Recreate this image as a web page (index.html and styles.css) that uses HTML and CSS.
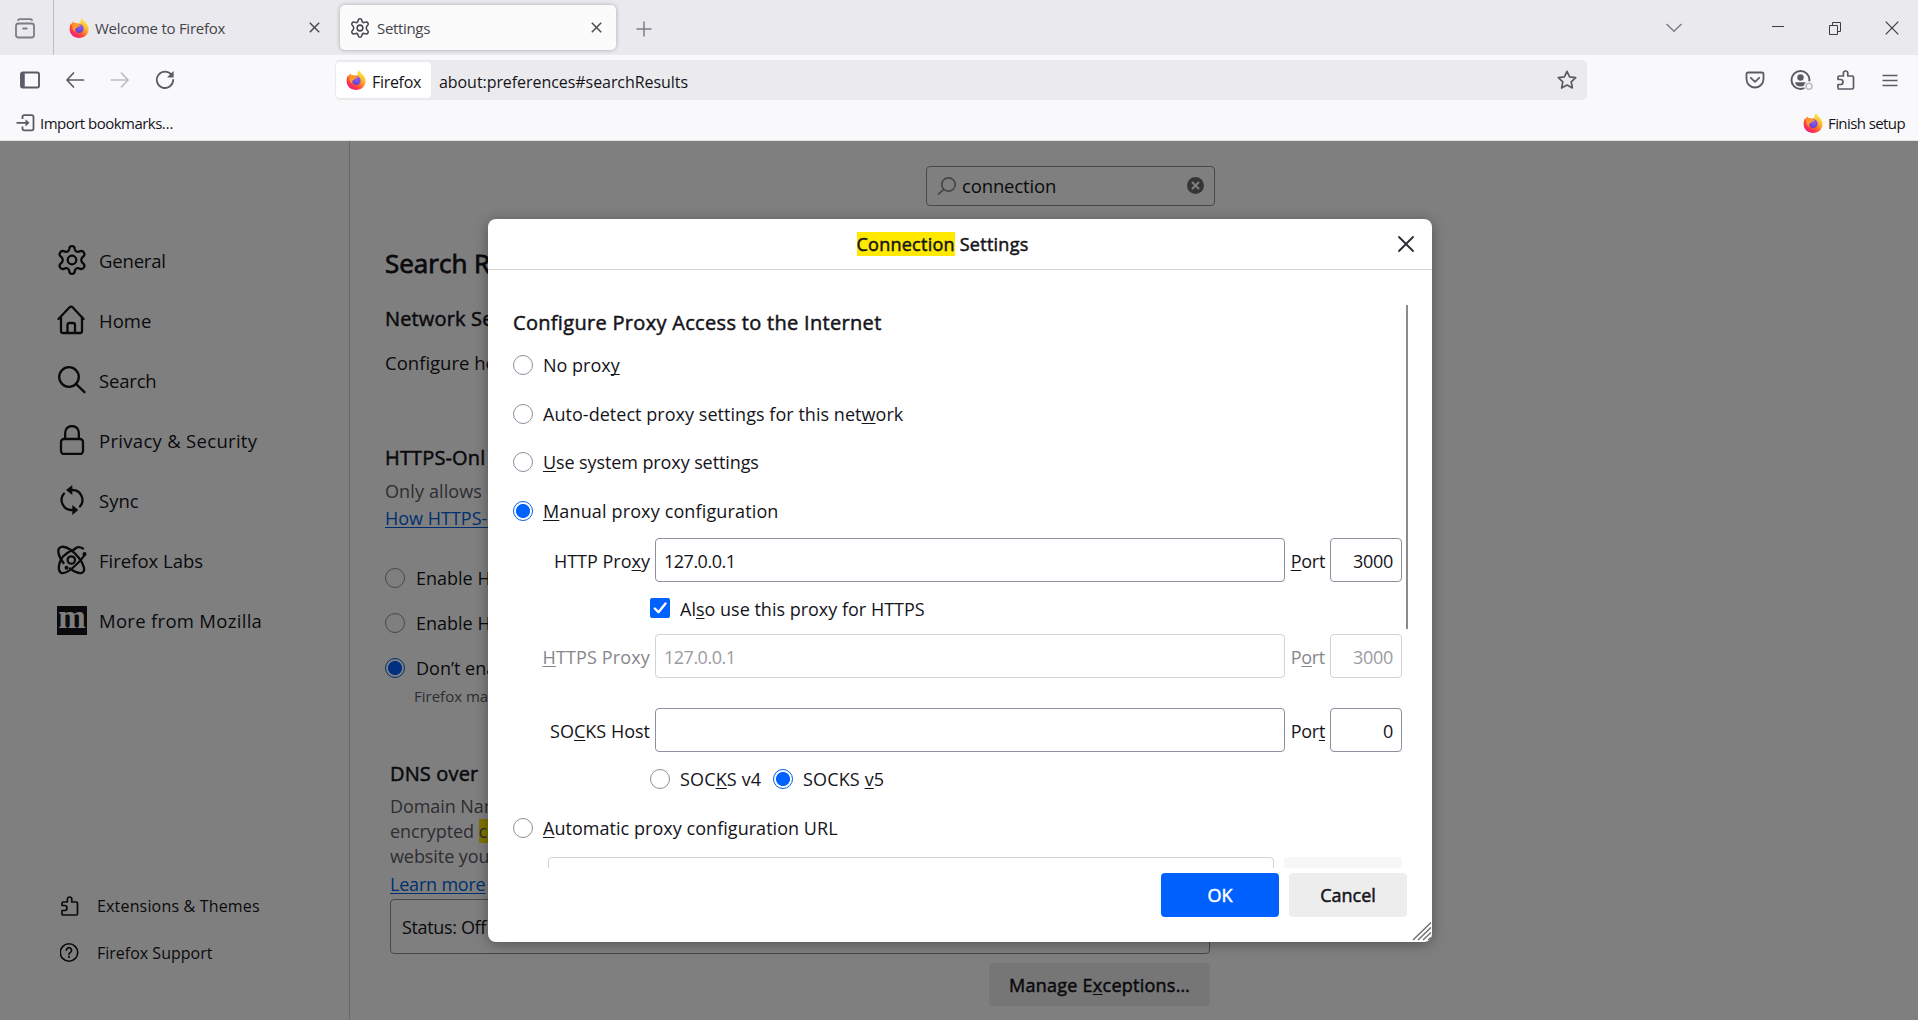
FILE: index.html
```
<!DOCTYPE html>
<html lang="en">
<head>
<meta charset="utf-8">
<title>Settings</title>
<link rel="stylesheet" href="styles.css">
</head>
<body>
<svg class="defs" width="0" height="0" aria-hidden="true">
  <defs>
    <linearGradient id="flame" x1="0.85" y1="0.1" x2="0.2" y2="0.95">
      <stop offset="0" stop-color="#fff44f"/>
      <stop offset="0.35" stop-color="#ffb02e"/>
      <stop offset="0.65" stop-color="#ff5634"/>
      <stop offset="1" stop-color="#f5127b"/>
    </linearGradient>
    <radialGradient id="globe" cx="0.6" cy="0.3" r="0.8">
      <stop offset="0" stop-color="#9059ff"/>
      <stop offset="1" stop-color="#5b3fc4"/>
    </radialGradient>
    <symbol id="firefox" viewBox="0 0 20 20">
      <path fill="url(#flame)" d="M13.1 0c.4 1.7 1.6 2.6 3 3.9 2 1.900 3.500 4 3.500 7 0 5-4.100 9-9.500 9S.6 16 .6 10.900c0-2.400.5-4.300 1.500-6 .2.7.4 1.200.8 1.600.1-1.300.5-2.400 1.300-3.300.3.9.8 1.500 1.500 1.900 1-.2 2-.1 2.900.3 1-.3 2-.3 3 0C11.300 3.700 11.700 1.700 13.100 0z"/>
      <circle cx="10.300" cy="10.600" r="4.300" fill="url(#globe)"/>
      <path fill="#ff9a2b" d="M3.500 6.600c1.500-1.200 3.800-1.300 5.800-.3l2.500.6c-.3 1-1.300 1.400-2.600 1.700-.5 1.300-1.500 1.400-2.400 1.900-.9.7-.8 2.400.2 3.700-2.700-1-4.300-4.300-3.500-7.600z"/>
    </symbol>
    <symbol id="gear" viewBox="0 0 30 30">
      <g fill="none" stroke="currentColor" stroke-width="2.300" stroke-linejoin="round">
        <circle cx="15" cy="15" r="4.300"/>
        <path d="M12.300 3.400Q12.600 1.200 15 1.200Q17.400 1.200 17.700 3.400L18.100 5.300Q19.100 7.100 21.200 6.900L23.300 6.200Q25.600 5.400 26.900 7.500Q28.200 9.600 26.400 11.300L25.100 12.500Q23.500 15 25.100 17.500L26.400 18.700Q28.200 20.400 26.900 22.500Q25.600 24.600 23.300 23.800L21.200 23.100Q19.100 22.900 18.100 24.700L17.700 26.600Q17.400 28.800 15 28.800Q12.600 28.800 12.300 26.600L11.900 24.700Q10.900 22.900 8.800 23.100L6.700 23.800Q4.400 24.600 3.100 22.500Q1.800 20.400 3.600 18.700L4.900 17.500Q6.500 15 4.900 12.500L3.600 11.300Q1.800 9.600 3.100 7.500Q4.400 5.400 6.700 6.200L8.800 6.900Q10.900 7.100 11.900 5.300Z"/>
      </g>
    </symbol>
    <symbol id="puzzle" viewBox="0 0 20 20">
      <path fill="none" stroke="currentColor" stroke-width="1.700" stroke-linejoin="round" d="M3 19h13.200a1.300 1.300 0 0 0 1.300-1.300V7.300A1.300 1.300 0 0 0 16.200 6H11.800V3.200a2.200 2.200 0 0 0-4.400 0V6H3.300A1.300 1.300 0 0 0 2 7.300V9.500H4.500a2.500 2.500 0 0 1 0 5H2V18a1 1 0 0 0 1 1z"/>
    </symbol>
  </defs>
</svg>

<header class="chrome">
  <div class="tabstrip">
    <div class="view-button">
      <svg width="22" height="22" viewBox="0 0 22 22" fill="none" stroke="#7d7d85" stroke-width="1.800" stroke-linecap="round"><path d="M4 2.200q.3-1 1.500-1h11q1.200 0 1.500 1"/><rect x="2" y="5.500" width="18" height="14" rx="2.500"/><path d="M9.200 10.500h3.600"/></svg>
    </div>
    <div class="tab">
      <svg class="fav" width="20" height="20"><use href="#firefox"/></svg>
      <span class="tab-title">Welcome to Firefox</span>
      <svg class="tab-close" width="11" height="11" viewBox="0 0 11 11" stroke="#4b4b52" stroke-width="1.500"><path d="M.8.8l9.400 9.400M10.200.8L.8 10.200"/></svg>
    </div>
    <div class="tab tab-active">
      <svg class="fav" width="20" height="20"><use href="#gear"/></svg>
      <span class="tab-title tab-title-active">Settings</span>
      <svg class="tab-close" width="11" height="11" viewBox="0 0 11 11" stroke="#4b4b52" stroke-width="1.500"><path d="M.8.8l9.400 9.400M10.200.8L.8 10.200"/></svg>
    </div>
    <svg class="new-tab" width="16" height="16" viewBox="0 0 16 16" stroke="#7d7d85" stroke-width="1.500"><path d="M8 .5v15M.5 8h15"/></svg>
    <svg class="all-tabs" width="18" height="10" viewBox="0 0 18 10" fill="none" stroke="#7d7d85" stroke-width="1.500"><path d="M1.500 1L9 8.300 16.500 1"/></svg>
    <div class="win-buttons">
      <span><svg width="14" height="14" viewBox="0 0 14 14" stroke="#3b3b40"><path d="M1 5.500h12"/></svg></span>
      <span><svg width="14" height="14" viewBox="0 0 14 14" fill="none" stroke="#3b3b40"><path d="M1.500 4.500h8v9h-8zM4.500 4.500v-3h8v9h-3"/></svg></span>
      <span><svg width="14" height="14" viewBox="0 0 14 14" stroke="#3b3b40" stroke-width="1.200"><path d="M.7.700l12.600 12.600M13.300.7L.7 13.300"/></svg></span>
    </div>
  </div>

  <div class="toolbar">
    <span class="tool"><svg width="22" height="18" viewBox="0 0 22 18" fill="none" stroke="#5b5b66"><rect x="2" y="1.500" width="18" height="15" rx="1.800" stroke-width="1.900"/><path d="M4 2v14" stroke-width="3.500"/></svg></span>
    <span class="tool"><svg width="20" height="18" viewBox="0 0 20 18" fill="none" stroke="#5b5b66" stroke-width="1.700" stroke-linecap="round" stroke-linejoin="round"><path d="M8.500 2L2 9l6.500 7M2 9h16.500"/></svg></span>
    <span class="tool"><svg width="20" height="18" viewBox="0 0 20 18" fill="none" stroke="#bcbcc0" stroke-width="1.700" stroke-linecap="round" stroke-linejoin="round"><path d="M11.500 2L18 9l-6.500 7M18 9H1.500"/></svg></span>
    <span class="tool"><svg width="20" height="20" viewBox="0 0 20 20" fill="none" stroke="#5b5b66" stroke-width="1.800"><path d="M16.600 4.900A8.200 8.200 0 1 0 18.200 10" stroke-linecap="round"/><path d="M18.600 1v6.600H12z" fill="#5b5b66" stroke="none"/></svg></span>
    <div class="urlbar">
      <div class="identity"><svg width="20" height="20"><use href="#firefox"/></svg><span>Firefox</span></div>
      <span class="url">about:preferences#searchResults</span>
      <svg class="star" width="20" height="20" viewBox="0 0 20 20" fill="none" stroke="#5b5b66" stroke-width="1.700" stroke-linejoin="round"><path d="M10 1.300l2.600 5.600 6.100.8-4.500 4.200 1.200 6.100L10 15l-5.400 3 1.200-6.100L1.300 7.700l6.100-.8z"/></svg>
    </div>
    <div class="tools-right">
      <span class="tool"><svg width="20" height="18" viewBox="0 0 20 18" fill="none" stroke="#5b5b66" stroke-width="1.800" stroke-linecap="round" stroke-linejoin="round"><path d="M3 1.500h14a1.500 1.500 0 0 1 1.500 1.500v5a8.500 8.500 0 0 1-17 0V3A1.500 1.500 0 0 1 3 1.500z"/><path d="M5.800 6.800L10 10.800l4.200-4"/></svg></span>
      <span class="tool tool-shift"><svg width="24" height="22" viewBox="0 0 24 22"><circle cx="11.500" cy="11" r="9" fill="none" stroke="#5b5b66" stroke-width="2"/><circle cx="11.500" cy="8.500" r="3.200" fill="#5b5b66"/><path d="M6 13.200h11q-1 4.300-5.500 4.300T6 13.200z" fill="#5b5b66"/><circle cx="20" cy="17.300" r="5" fill="#f9f9fb"/><circle cx="20" cy="17.300" r="3" fill="#f9f9fb" stroke="#bcbcc0" stroke-width="1.600"/></svg></span>
      <span class="tool tool-shift"><svg width="20" height="20"><use href="#puzzle"/></svg></span>
      <span class="tool"><svg width="16" height="13" viewBox="0 0 16 13" stroke="#5b5b66" stroke-width="1.500"><path d="M.5 1.500h15M.5 6.500h15M.5 11.500h15"/></svg></span>
    </div>
  </div>

  <div class="bookmarks">
    <svg width="19" height="18" viewBox="0 0 19 18" fill="none" stroke="#5b5b66" stroke-width="1.800" stroke-linejoin="round"><path d="M6.500 5V3a1.800 1.800 0 0 1 1.800-1.800h7.400A1.800 1.800 0 0 1 17.500 3v11.500a1.800 1.800 0 0 1-1.800 1.800H8.300a1.800 1.800 0 0 1-1.800-1.800v-2M.5 8.800H11"/><path d="M9.500 5.200l4 3.600-4 3.600z" fill="#5b5b66" stroke="none"/></svg>
    <span class="bm-import">Import bookmarks…</span>
    <svg class="bm-fox" width="20" height="20"><use href="#firefox"/></svg>
    <span class="bm-finish">Finish setup</span>
  </div>
</header>

<main class="page">
  <nav class="sidebar">
    <a class="nav-item"><svg width="30" height="30"><use href="#gear"/></svg><span class="tight">General</span></a>
    <a class="nav-item"><svg width="30" height="30" viewBox="0 0 30 30" fill="none" stroke="currentColor" stroke-width="2.300" stroke-linecap="round" stroke-linejoin="round"><path d="M1.500 14L12.600 2.300a2 2 0 0 1 3 0L26.500 14M4 12v14a2 2 0 0 0 2 2h17a2 2 0 0 0 2-2V12M10.500 27.500V20a2 2 0 0 1 2-2h3.500a2 2 0 0 1 2 2v7.500"/></svg><span>Home</span></a>
    <a class="nav-item"><svg width="30" height="30" viewBox="0 0 30 30" fill="none" stroke="currentColor" stroke-width="2.300" stroke-linecap="round"><circle cx="12" cy="12" r="9.800"/><path d="M19.200 19.200l8.300 8"/></svg><span class="tight">Search</span></a>
    <a class="nav-item"><svg width="30" height="30" viewBox="0 0 30 30" fill="none" stroke="currentColor" stroke-width="2.300"><rect x="4" y="14" width="22" height="15" rx="3"/><path d="M8.200 14V7.500a6.800 6.500 0 0 1 13.600 0V14"/></svg><span class="loose">Privacy &amp; Security</span></a>
    <a class="nav-item"><svg width="30" height="30" viewBox="0 0 30 30"><g fill="none" stroke="currentColor" stroke-width="2.300" stroke-linecap="round"><path d="M15 5a10 10 0 0 1 8 16.500M15 25A10 10 0 0 1 7 8.500"/></g><path fill="currentColor" d="M15.300 0v10L9 5zM15.300 20v10l6-5z"/></svg><span>Sync</span></a>
    <a class="nav-item"><svg width="30" height="30" viewBox="0 0 30 30" fill="none" stroke="currentColor" stroke-width="2.300" stroke-linecap="round"><path d="M17 4.500C20 2 22 1.200 26 3.500"/><path d="M17 4.500C13 6 9 8.500 6 11.500S-.5 25 4 27.800c3 1 8-1.800 11.500-4.800 4-3.500 9-8 12-13"/><path d="M6.500 18C1 11-.5 3.500 4 2c5.500-1.500 13 4.500 18 11s7 13 3 14.800c-3 1-8-1.300-12-4.300"/><circle cx="14.300" cy="15" r="3.700"/><circle cx="9.500" cy="22.700" r="2" fill="currentColor" stroke="none"/><circle cx="27.500" cy="9" r="2" fill="currentColor" stroke="none"/></svg><span>Firefox Labs</span></a>
    <a class="nav-item"><span class="moz">m</span><span class="loose">More from Mozilla</span></a>
    <div class="nav-foot">
      <a class="foot-item"><svg width="20" height="20"><use href="#puzzle"/></svg><span class="foot-ext">Extensions &amp; Themes</span></a>
      <a class="foot-item"><svg width="20" height="20" viewBox="0 0 20 20" fill="none" stroke="currentColor" stroke-width="1.600" stroke-linecap="round"><circle cx="9" cy="9.500" r="8.700"/><path d="M6.400 7.200a2.600 2.600 0 1 1 4 2.200c-1 .6-1.400 1-1.400 2"/><path d="M9 13.800v.1" stroke-width="2"/></svg><span>Firefox Support</span></a>
    </div>
  </nav>

  <section class="content">
    <div class="search-box">
      <svg width="20" height="20" viewBox="0 0 20 20" fill="none" stroke="#8a8a90" stroke-width="1.700"><circle cx="11.500" cy="8.500" r="6.700"/><path d="M6.700 13.300L1 18.700"/></svg>
      <span>connection</span>
      <svg width="17" height="17" viewBox="0 0 17 17"><circle cx="8.500" cy="8.500" r="8.500" fill="#6a6a6d"/><path d="M5 5l7 7M12 5l-7 7" stroke="#fff" stroke-width="2"/></svg>
    </div>
    <h1>Search R</h1>
    <h2 class="h-network">Network Se</h2>
    <p class="configure">Configure ho</p>
    <h2 class="h-https">HTTPS-Onl</h2>
    <p class="desc">Only allows</p>
    <p class="link-row"><a class="link">How HTTPS-O</a></p>
    <div class="https-modes">
      <div class="mode"><i class="radio"></i><span>Enable H</span></div>
      <div class="mode"><i class="radio"></i><span>Enable H</span></div>
      <div class="mode"><i class="radio on"></i><span>Don’t ena</span></div>
      <p class="mode-note">Firefox may</p>
    </div>
    <div class="dns">
      <h2>DNS over</h2>
      <p class="dns-text">Domain Nam<br>encrypted <mark>co</mark><br>website you</p>
      <p class="dns-more"><a class="link">Learn more</a></p>
      <div class="status">Status: Off</div>
      <div class="exceptions">Manage E<u>x</u>ceptions…</div>
    </div>
  </section>

  <div class="overlay"></div>

  <div class="dialog">
    <div class="dialog-head">
      <div class="dialog-title"><mark>Connection</mark> Settings</div>
      <svg class="dialog-close" width="18" height="18" viewBox="0 0 18 18" stroke="#2b2a33" stroke-width="1.800" stroke-linecap="round"><path d="M2 2l14 14M16 2L2 16"/></svg>
    </div>
    <div class="dialog-body">
      <h3>Configure Proxy Access to the Internet</h3>
      <div class="opt"><i class="radio"></i><span>No prox<u>y</u></span></div>
      <div class="opt"><i class="radio"></i><span class="auto-detect">Auto-detect proxy settings for this net<u>w</u>ork</span></div>
      <div class="opt"><i class="radio"></i><span class="tighter"><u>U</u>se system proxy settings</span></div>
      <div class="opt"><i class="radio on"></i><span class="looser"><u>M</u>anual proxy configuration</span></div>
      <div class="field first">
        <label>HTTP Pro<u>x</u>y</label><div class="input">127.0.0.1</div><label class="port"><u>P</u>ort</label><div class="input num">3000</div>
      </div>
      <div class="also"><i class="check"><svg width="20" height="20" viewBox="0 0 20 20" fill="none" stroke="#fff" stroke-width="2.400" stroke-linecap="round" stroke-linejoin="round"><path d="M4.800 10.500l3.700 3.700 7-8.700"/></svg></i><span>Al<u>s</u>o use this proxy for HTTPS</span></div>
      <div class="field disabled">
        <label class="looser"><u>H</u>TTPS Proxy</label><div class="input">127.0.0.1</div><label class="port">P<u>o</u>rt</label><div class="input num">3000</div>
      </div>
      <div class="field socks">
        <label>SO<u>C</u>KS Host</label><div class="input"></div><label class="port">Por<u>t</u></label><div class="input num">0</div>
      </div>
      <div class="versions"><i class="radio"></i><span class="ver looser">SOC<u>K</u>S v4</span><i class="radio on"></i><span class="looser">SOCKS <u>v</u>5</span></div>
      <div class="opt auto"><i class="radio"></i><span class="auto-detect"><u>A</u>utomatic proxy configuration URL</span></div>
      <div class="auto-url"><div class="input"></div><div class="reload"></div></div>
      <div class="scroll-thumb"></div>
    </div>
    <div class="dialog-foot">
      <div class="btn primary">OK</div>
      <div class="btn">Cancel</div>
    </div>
    <svg class="grip" width="20" height="20" viewBox="0 0 20 20" stroke="#6e6e72" stroke-width="1.400"><path d="M1 18L19 .5M6 18L19 5.500M11 18l8-7.500M16 18l3-2.500"/></svg>
  </div>
</main>
</body>
</html>
```
FILE: styles.css
```
* { box-sizing: border-box; }

body {
  margin: 0;
  width: 1918px;
  height: 1020px;
  overflow: hidden;
  display: flex;
  flex-direction: column;
  font-family: "Open Sans", "Noto Sans", sans-serif;
  color: #15141a;
  background: #fff;
}

h1, h2, h3, p { margin: 0; }
svg { display: block; flex: none; }
.defs { position: absolute; }

u {
  text-decoration: underline;
  text-decoration-thickness: 1px;
  text-underline-offset: 2px;
  text-decoration-skip-ink: none;
}

mark { background: #ffe900; color: inherit; }

/* Medium weight, between the regular and semibold faces */
h1, h2, h3, .exceptions, .dialog-title, .btn {
  font-weight: 400;
  -webkit-text-stroke: 0.5px currentColor;
}

/* Browser chrome */
.chrome {
  height: 141px;
  flex: none;
  background: #f9f9fb;
  border-bottom: 1px solid #dfe2df;
}

.tabstrip {
  height: 55px;
  background: #eaeaee;
  display: flex;
  align-items: center;
}

.view-button {
  width: 54px;
  height: 55px;
  padding: 18px 0 0 14px;
  border-right: 1px solid #bdbdc2;
}

.tab {
  width: 286px;
  height: 45px;
  display: flex;
  align-items: center;
  gap: 6px;
  padding: 0 20px 0 15px;
  font-size: 15px;
  letter-spacing: -0.26px;
  color: #45454c;
}

.tab-active {
  width: 276px;
  gap: 7px;
  padding: 0 14px 0 10px;
  border-radius: 5px;
  background: #fbfbfb;
  box-shadow: 0 0 4px rgba(0, 0, 0, .28);
}

.tab-title { flex: 1; padding-top: 1px; }
.tab-title-active { letter-spacing: -0.33px; }
.new-tab { margin-left: 20px; margin-top: 2px; }
.all-tabs { margin-left: auto; margin-right: 66px; }

.win-buttons { display: flex; margin-right: -2px; }
.win-buttons span { width: 57px; display: flex; justify-content: center; }

.toolbar {
  height: 50px;
  display: flex;
  align-items: center;
  padding: 0 6px 0 7px;
}

.tool { width: 45px; display: flex; justify-content: center; color: #5b5b66; }
.tool-shift { padding-left: 2px; }

.urlbar {
  margin-left: 148px;
  width: 1252px;
  height: 40px;
  border-radius: 5px;
  background: #ebebed;
  display: flex;
  align-items: center;
  padding: 0 10px 0 1px;
  font-size: 16px;
}

.identity {
  width: 95px;
  height: 36px;
  border-radius: 4px;
  background: #fff;
  display: flex;
  align-items: center;
  gap: 6px;
  padding-left: 10px;
  letter-spacing: -0.31px;
}

.url { flex: 1; margin-left: 8px; padding-top: 3px; letter-spacing: -0.06px; }
.identity span { padding-top: 3px; }
.tools-right { display: flex; align-items: center; margin-left: auto; }

.bookmarks {
  height: 35px;
  display: flex;
  align-items: center;
  padding: 0 13px 0 16px;
  font-size: 15px;
}

.bm-import { margin-left: 5px; letter-spacing: -0.52px; }
.bm-fox { margin-left: auto; }
.bm-finish { margin-left: 5px; letter-spacing: -0.59px; }

/* Settings page */
.page { position: relative; flex: 1; display: flex; min-height: 0; }

.sidebar {
  width: 350px;
  border-right: 1px solid #d0d0d4;
  padding: 89px 0 44px;
  display: flex;
  flex-direction: column;
}

.nav-item {
  height: 60px;
  padding-left: 57px;
  display: flex;
  align-items: center;
  gap: 12px;
  font-size: 18.5px;
}

.tight { letter-spacing: -0.18px; }
.loose { letter-spacing: 0.3px; }

.moz {
  width: 30px;
  height: 29px;
  background: #15141a;
  color: #fff;
  font: bold 33px/22px "Liberation Serif", serif;
  text-align: center;
}

.nav-foot { margin-top: auto; }

.foot-item {
  height: 47px;
  padding-left: 60px;
  display: flex;
  align-items: center;
  gap: 17px;
  font-size: 16px;
}

.foot-ext { letter-spacing: 0.17px; }

.content { width: 865px; padding: 25px 0 0 35px; font-size: 18px; }

.search-box {
  width: 289px;
  height: 40px;
  margin-left: auto;
  border: 1px solid #8f8f9d;
  border-radius: 4px;
  display: flex;
  align-items: center;
  padding: 0 10px 1px 10px;
  font-size: 18.5px;
  letter-spacing: -0.15px;
}

.search-box span { flex: 1; margin-left: 5px; }

h1 { margin-top: 37px; font-size: 26px; line-height: 40px; letter-spacing: 0; -webkit-text-stroke-width: 0.8px; }
h2 { font-size: 20px; line-height: 30px; letter-spacing: 0.15px; }
.h-network { margin-top: 21px; }
.configure { margin-top: 14px; line-height: 30px; font-size: 18.5px; }
.h-https { margin-top: 65px; }
.desc { margin-top: 5px; line-height: 26px; letter-spacing: 0.12px; color: #5b5b66; }
.link-row { margin-top: 1px; line-height: 26px; }
.link { color: #0061e0; text-decoration: underline; text-decoration-thickness: 1px; text-underline-offset: 2px; text-decoration-skip-ink: none; }

.https-modes { margin-top: 24px; }
.mode { height: 45px; display: flex; align-items: center; gap: 11px; }
.mode-note { margin: -4px 0 0 29px; font-size: 15px; line-height: 20px; color: #5b5b66; }

.radio {
  width: 20px;
  height: 20px;
  flex: none;
  border: 1px solid #8f8f9d;
  border-radius: 50%;
  background: #fff;
}

.radio.on {
  border-color: #0061e0;
  background: radial-gradient(circle, #0061fe 6.600px, #fff 7.400px);
}

.dns { margin: 53px 0 0 5px; }
.dns-text { margin-top: 5px; line-height: 25px; letter-spacing: -0.08px; color: #5b5b66; }
.dns-more { margin-top: 3px; line-height: 25px; letter-spacing: -0.2px; }

.status {
  height: 55px;
  margin: 2px 5px 0 0;
  padding: 0 11px;
  border: 1px solid #8f8f9d;
  border-radius: 4px;
  line-height: 55px;
  letter-spacing: -0.35px;
}

.exceptions {
  width: 221px;
  height: 43px;
  margin: 9px 5px 0 auto;
  border-radius: 4px;
  background: #ececee;
  text-align: center;
  line-height: 44px;
  letter-spacing: 0.25px;
}

.overlay { position: absolute; inset: 0; background: rgba(0, 0, 0, .5); }

/* Modal dialog */
.dialog {
  position: absolute;
  left: 488px;
  top: 78px;
  width: 944px;
  height: 723px;
  border-radius: 8px;
  background: #fff;
  box-shadow: 0 2px 14px rgba(0, 0, 0, .35);
  display: flex;
  flex-direction: column;
  font-size: 18px;
}

.dialog-head {
  height: 51px;
  flex: none;
  display: flex;
  align-items: center;
  padding-right: 17px;
  border-bottom: 1px solid #d4d4d6;
}

.dialog-title {
  flex: 1;
  text-align: center;
  letter-spacing: 0.25px;
}

.dialog-body {
  position: relative;
  height: 598px;
  flex: none;
  overflow: hidden;
  padding: 38px 30px 0 25px;
}

h3 { font-size: 20px; line-height: 30px; letter-spacing: 0.31px; margin-bottom: 3px; }

.opt { height: 48.500px; display: flex; align-items: center; gap: 10px; }
.auto-detect { letter-spacing: 0.04px; }
.tighter { letter-spacing: -0.1px; }
.looser { letter-spacing: 0.14px; }

.field {
  height: 44px;
  display: grid;
  grid-template-columns: 137px 630px 35px 72px;
  column-gap: 5px;
  align-items: center;
}

.field label { text-align: right; white-space: nowrap; padding-top: 1px; }
.field .port { letter-spacing: -0.3px; }
.first { margin-top: 3px; }
.socks { margin-top: 30px; }

.input {
  height: 44px;
  border: 1px solid #8f8f9d;
  border-radius: 4px;
  padding: 0 8px;
  line-height: 44px;
  letter-spacing: -0.5px;
}

.num { text-align: right; letter-spacing: -0.29px; }

.disabled label { color: #87868b; }
.disabled .input { color: #9c9ba0; border-color: #d2d2d7; }

.also { height: 52px; padding-left: 137px; display: flex; align-items: center; gap: 10px; }
.check { width: 20px; height: 20px; border-radius: 2px; background: #0061fe; }
.also span { padding-top: 2px; }

.versions { height: 54px; padding-left: 137px; display: flex; align-items: center; gap: 10px; }
.ver { width: 83px; }

.auto { height: 44px; }
.auto-url { margin-top: 7px; padding-left: 35px; display: flex; gap: 10px; }
.auto-url .input { flex: 1; border-color: #d2d2d7; }
.reload { width: 118px; height: 44px; border-radius: 4px; background: #f7f7f8; }

.scroll-thumb {
  position: absolute;
  right: 24px;
  top: 35px;
  width: 2px;
  height: 324px;
  background: #8b8b8b;
}

.dialog-foot { flex: 1; display: flex; justify-content: flex-end; gap: 10px; padding: 5px 25px 0 0; }

.btn {
  width: 118px;
  height: 44px;
  border-radius: 4px;
  background: #ededee;
  text-align: center;
  line-height: 45px;
}

.primary { background: #0061fe; color: #fff; }

.grip { position: absolute; right: 0; bottom: 0; }
```
